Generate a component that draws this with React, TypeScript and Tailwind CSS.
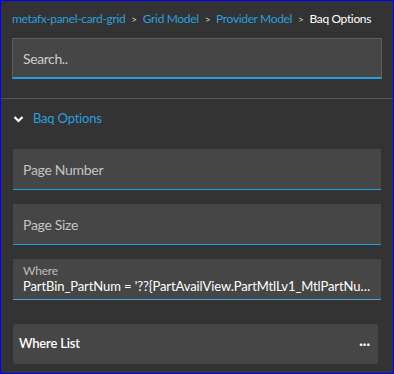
const font = { fontFamily: '"Source Sans Pro", Lato, "Open Sans", sans-serif' };

function Field({ label }: { label: string }) {
  return (
    <div className="mx-[12px] h-[41px] bg-[#464646] border-b border-[#1e9fe6] flex items-center px-[10px]">
      <span className="text-[14px] tracking-[-0.3px] text-[#c4c4c4]">{label}</span>
    </div>
  );
}

export default function App() {
  return (
    <div
      className="w-[394px] h-[374px] bg-[#333333] border border-[#0000ff] overflow-hidden flex flex-col"
      style={font}
    >
      {/* breadcrumb */}
      <div className="flex items-center h-[32px] pt-[4px] px-[11px] text-[12px] tracking-[-0.35px] text-[#2b9fdf] whitespace-nowrap">
        <span>metafx-panel-card-grid</span>
        <span className="mx-[6px] text-[#cfcfcf] text-[10px]">&gt;</span>
        <span>Grid Model</span>
        <span className="mx-[6px] text-[#cfcfcf] text-[10px]">&gt;</span>
        <span>Provider Model</span>
        <span className="mx-[6px] text-[#cfcfcf] text-[10px]">&gt;</span>
        <span className="text-white">Baq Options</span>
      </div>

      {/* search */}
      <div className="mt-[5px] mx-[11px] h-[41px] bg-[#464646] border border-[#5e5e5e] border-b-2 border-b-[#1e9fe6] flex items-center px-[10px]">
        <span className="text-[14px] tracking-[-0.4px] text-[#cccccc]">Search..</span>
      </div>

      <div className="mt-[19px] h-px bg-[#575757]" />

      {/* section header */}
      <div className="flex items-center h-[40px] px-[12px] gap-[9px]">
        <svg width="11" height="8" viewBox="0 0 11 8" aria-hidden="true">
          <path d="M1.5 2 L5.5 6 L9.5 2" fill="none" stroke="#ffffff" strokeWidth="2.2" />
        </svg>
        <span className="text-[13px] tracking-[-0.2px] text-[#2b9fdf]">Baq Options</span>
      </div>

      <div className="mt-[10px] flex flex-col gap-[14px]">
        <Field label="Page Number" />
        <Field label="Page Size" />
        <div className="mx-[12px] h-[41px] bg-[#464646] border-b border-[#4aa3d6] flex flex-col justify-center px-[10px]">
          <span className="text-[12px] leading-[14px] tracking-[-0.2px] text-[#bdbdbd]">Where</span>
          <span className="text-[13px] leading-[17px] tracking-[-0.1px] text-white truncate">
            PartBin_PartNum = '??{`{`}PartAvailView.PartMtlLv1_MtlPartNum{`}`}'
          </span>
        </div>
      </div>

      <div className="mt-[24px] mx-[12px] w-[365px] h-[40px] rounded-[3px] bg-[#464646] flex items-center justify-between px-[6px]">
        <span className="text-[13px] font-semibold tracking-[-0.2px] text-white">Where List</span>
        <span className="text-[13px] font-bold text-white leading-none pr-[2px]">···</span>
      </div>
    </div>
  );
}
